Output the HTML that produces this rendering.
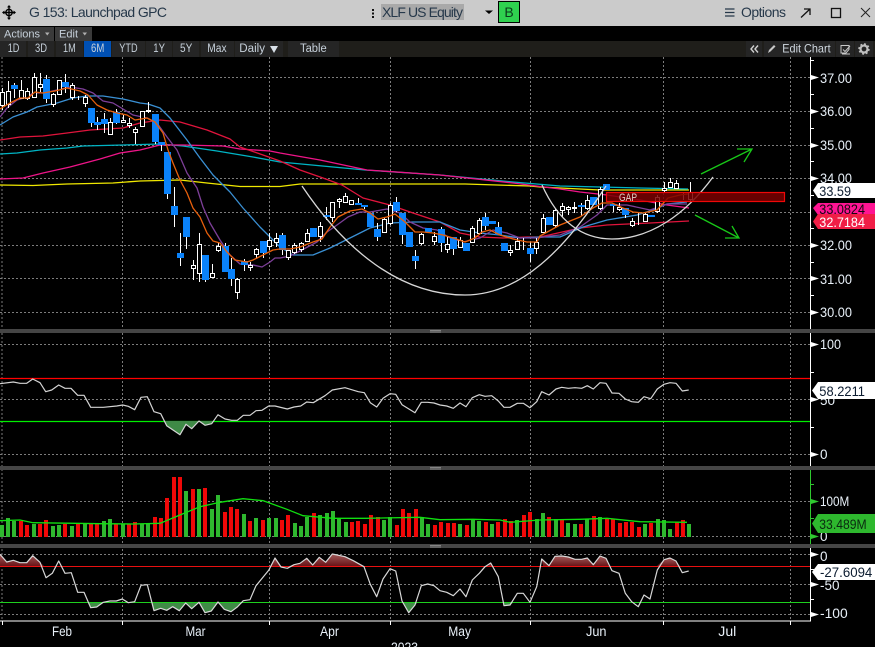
<!DOCTYPE html>
<html><head><meta charset="utf-8"><style>
html,body{margin:0;padding:0;background:#000;width:875px;height:647px;overflow:hidden}
svg{display:block;font-family:"Liberation Sans",sans-serif}
</style></head><body>
<svg width="875" height="647" viewBox="0 0 875 647" xmlns="http://www.w3.org/2000/svg">
<defs>
<linearGradient id="rd" x1="0" y1="0" x2="0" y2="1"><stop offset="0" stop-color="#a05a5a"/><stop offset="1" stop-color="#6a1418"/></linearGradient>
</defs>
<rect width="875" height="647" fill="#000"/>
<!-- header -->
<rect width="875" height="26" fill="#cbcbcb"/>
<g stroke="#000" stroke-width="1.4" fill="none"><circle cx="9" cy="12.5" r="3.2"/><path d="M9 6.5V18.5M3 12.5H15"/></g>
<path d="M9 5l-2 2.4h4zM9 20l-2-2.4h4zM2 12.5l2.4-2v4zM16 12.5l-2.4-2v4z" fill="#000"/>
<text x="29" y="17" font-size="14" fill="#26384a" textLength="138">G 153: Launchpad GPC</text>
<path d="M372 9h2v2h-2zM372 12.500h2v2h-2zM372 16h2v2h-2z" fill="#111"/>
<rect x="381" y="4" width="83" height="16" fill="#a9a9a9"/>
<text x="382" y="17" font-size="14" fill="#26384a" textLength="81">XLF US Equity</text>
<path d="M485 10.500h8l-4 3.500z" fill="#000"/>
<rect x="498.500" y="1.500" width="21" height="21" fill="#2fd14f" stroke="#000"/>
<text x="509" y="17" font-size="14" fill="#0b3a1c" text-anchor="middle">B</text>
<path d="M725 9h9.500M725 12.500h9.500M725 16h9.500" stroke="#26384a" stroke-width="1.200"/>
<text x="741" y="17" font-size="14" fill="#26384a" textLength="45">Options</text>
<path d="M801 17.500L810 9M804 9h6v6" stroke="#111" stroke-width="1.300" fill="none"/>
<rect x="831.500" y="8.500" width="9" height="9" fill="none" stroke="#111" stroke-width="1.300"/>
<path d="M861 8L870 17M870 8L861 17" stroke="#222" stroke-width="1"/>
<!-- actions row -->
<rect x="0" y="27" width="54" height="14" fill="#3a3a3a"/>
<rect x="55" y="27" width="37" height="14" fill="#3a3a3a"/>
<text x="4" y="37.500" font-size="11" fill="#c6d0da" textLength="36">Actions</text>
<path d="M45 32.500h4.500l-2.250 3z" fill="#b0b0b0"/>
<text x="59" y="37.500" font-size="11" fill="#c6d0da" textLength="19">Edit</text>
<path d="M82.500 32.500h4.500l-2.250 3z" fill="#b0b0b0"/>
<!-- range row -->
<rect x="0" y="41" width="875" height="16" fill="#1f1e1a"/>
<g fill="#252525"><rect x="0" y="41" width="26" height="16"/><rect x="28" y="41" width="26" height="16"/><rect x="56" y="41" width="27" height="16"/><rect x="112" y="41" width="33" height="16"/><rect x="146" y="41" width="26" height="16"/><rect x="173" y="41" width="26" height="16"/><rect x="201" y="41" width="33" height="16"/><rect x="235" y="41" width="48" height="16"/><rect x="288" y="41" width="51" height="16"/><rect x="746" y="41" width="16" height="16"/><rect x="764" y="41" width="71" height="16"/><rect x="836" y="41" width="18" height="16"/><rect x="855" y="41" width="18" height="16"/></g>
<rect x="84" y="41" width="27" height="16" fill="#0050b4"/>
<g font-size="11.500" fill="#c6d0da" lengthAdjust="spacingAndGlyphs">
<text x="7.700" y="52" textLength="11.700" lengthAdjust="spacingAndGlyphs">1D</text><text x="35" y="52" textLength="12" lengthAdjust="spacingAndGlyphs">3D</text><text x="63" y="52" textLength="12.700" lengthAdjust="spacingAndGlyphs">1M</text><text x="91" y="52" textLength="13.300" lengthAdjust="spacingAndGlyphs">6M</text><text x="119.300" y="52" textLength="18.300" lengthAdjust="spacingAndGlyphs">YTD</text><text x="153.300" y="52" textLength="11.700" lengthAdjust="spacingAndGlyphs">1Y</text><text x="180" y="52" textLength="12.300" lengthAdjust="spacingAndGlyphs">5Y</text><text x="207.300" y="52" textLength="19.300" lengthAdjust="spacingAndGlyphs">Max</text><text x="239.300" y="52" textLength="25.700" lengthAdjust="spacingAndGlyphs">Daily</text><text x="300" y="52" textLength="26.700" lengthAdjust="spacingAndGlyphs">Table</text>
</g>
<path d="M270 46h8l-4 7z" fill="#d8e0e8"/>
<path d="M754 45.500l-3 3.500 3 3.500M758 45.500l-3 3.500 3 3.500" stroke="#d0d0d0" stroke-width="1.400" fill="none"/>
<path d="M768 53l1-3 5-5 1.500 1.500-5 5z" fill="#c8c8c8"/>
<text x="782.300" y="52.500" font-size="12" fill="#d0d8e0" textLength="48.300" lengthAdjust="spacingAndGlyphs">Edit Chart</text>
<path d="M841 45.500h8v4l-3 3.500h-5zM843 49.500l2 2 5-5.500M842 54h8" stroke="#c8c8c8" fill="none"/>
<circle cx="864" cy="49" r="3.500" fill="none" stroke="#c0c0c0" stroke-width="2.200"/><circle cx="864" cy="49" r="5" fill="none" stroke="#c0c0c0" stroke-width="1.400" stroke-dasharray="2 1.900"/>
<!-- grid -->
<g stroke="#7c7c7c" stroke-width="1" stroke-dasharray="2 2" fill="none" shape-rendering="crispEdges">
<path d="M2 57V621M122.500 57V621M269.500 57V621M390.500 57V621M530.500 57V621M663.500 57V621M790.500 57V621"/>
<path d="M0 77.500H810M0 111.500H810M0 145.500H810M0 178.500H810M0 212.500H810M0 245.500H810M0 278.500H810M0 312.500H810M0 344.500H810M0 399.500H810M0 454.500H810M0 501.500H810M0 536.500H810M0 554.500H810M0 584.500H810M0 614.500H810"/>
</g>
<!-- moving averages -->
<g fill="none" stroke-width="1.300" stroke-linejoin="round">
<polyline stroke="#f0e800" points="0,185 33,185.500 67,184 113,183 140,181 180,180 207,183 240,186.500 280,186.500 300,184 385,184 465,184 530,186 540,187 600,190 689,190"/>
<polyline stroke="#00b4c4" points="0,154 17,153 40,150 67,148 83,146 123,145 160,144 183,146 217,151 253,157 280,162 365,170 440,175 513,182 560,186 600,187 640,188 688,189"/>
<polyline stroke="#ee1488" points="0,179 23,178 43,173 70,167 100,159 120,153 140,150 160,145 183,145 223,146 240,149 270,151 280,153 320,160 367,170 440,175 513,183 560,189 580,192 607,195 640,200 667,205 689,208"/>
<polyline stroke="#e0143c" points="0,140 20,137 43,136 67,133 90,130 123,128 140,123 160,120 180,122 207,130 230,139 240,147 263,155 280,161 300,170 323,178 342,185 363,198 390,205 413,213 440,222 460,233 480,237 503,238 527,237 540,237 580,228 607,225 650,223 689,221"/>
<polyline stroke="#3a90d4" points="0,125 13,117 27,112 37,107 57,103 73,98 87,96 103,96 123,99 140,103 148,104 160,108 170,118 187,140 200,158 213,175 230,192 243,208 260,227 273,240 280,247 293,255 313,255 330,248 350,238 370,228 390,223 413,222 440,222 460,230 480,233 500,235 520,238 540,237 560,237 583,227 607,220 637,215 653,210 667,204 687,202"/>
<polyline stroke="#7d3f98" points="0,117 7,108 17,100 27,97 33,93 43,93 57,90 70,87 83,89 93,93 103,101 113,103 123,109 133,115 147,118 157,123 167,137 177,150 187,173 197,188 203,207 210,223 220,240 230,255 240,264 253,265 262,267 270,262 275,258 280,258 290,256 300,251 317,242 327,232 337,225 348,217 360,212 370,212 387,209 400,213 410,222 423,228 437,230 450,238 463,242 480,238 493,230 507,233 520,238 537,238 550,236 560,235 580,227 597,215 607,205 627,205 650,210 667,204 687,204"/>
</g>
<!-- candles wicks -->
<path shape-rendering="crispEdges" stroke="#fff" stroke-width="1" fill="none" d="M2.500 88V110M8.500 81V108M14.500 83V98M21.500 80V98M27.500 88V100M34.500 73V98M40.500 73V92M46.500 75V103M53.500 93V107M59.500 80V94M65.500 74V93M72.500 83V100M78.500 96V100M85.500 95V107M91.500 108V127M97.500 117V130M104.500 113V133M110.500 118V135M116.500 109V124M123.500 115V123M129.500 118V128M135.500 127V144M142.500 111V127M148.500 102V113M155.500 114V144M161.500 142V151M167.500 152V199M174.500 187V227M180.500 233V266M186.500 217V249M193.500 260V280M199.500 233V282M205.500 255V282M212.500 264V277M218.500 243V252M225.500 243V272M231.500 258V286M237.500 278V299M244.500 259V271M250.500 262V271M256.500 248V258M263.500 241V258M269.500 233V250M276.500 233V247M282.500 233V255M288.500 250V260M294.500 243V254M301.500 242V252M307.500 229V242M313.500 228V237M320.500 222V242M326.500 207V220M332.500 202V222M339.500 198V208M345.500 193V203M351.500 200V204M358.500 198V205M364.500 205V209M370.500 213V227M377.500 223V241M384.500 217V232M390.500 203V225M396.500 197V212M402.500 213V244M409.500 232V247M415.500 250V269M421.500 233V245M428.500 228V232M434.500 232V245M441.500 227V252M447.500 237V253M453.500 237V255M460.500 237V248M466.500 243V251M472.500 226V243M479.500 218V235M485.500 213V230M492.500 221V224M498.500 222V235M504.500 243V251M510.500 245V256M517.500 238V250M523.500 238V250M530.500 242V262M536.500 238V254M543.500 214V233M549.500 217V225M555.500 208V227M562.500 203V217M568.500 206V215M574.500 202V213M581.500 203V216M587.500 195V210M593.500 197V205M600.500 187V210M606.500 184V190M613.500 204V212M619.500 203V211M625.500 208V218M632.500 218V227M638.500 213V225M645.500 212V221M651.500 215V217M657.500 195V213M664.500 182V192M670.500 178V188M676.500 180V188M683.500 192V200M690.500 182V202"/>
<!-- hollow bodies -->
<path shape-rendering="crispEdges" stroke="#fff" stroke-width="1" fill="#000" d="M.5 92.500h4v13h-4zM6.500 91.500h4v13h-4zM19.500 90.500h4v8h-4zM25.500 91.500h4v7h-4zM32.500 77.500h4v20h-4zM38.500 84.500h4v3h-4zM51.500 94.500h4v10h-4zM57.500 80.500h4v14h-4zM70.500 85.500h4v12h-4zM83.500 97.500h4v6h-4zM108.500 122.500h4v12h-4zM121.500 120.500h4v2h-4zM127.500 123.500h4v2h-4zM133.500 129.500h4v3h-4zM140.500 111.500h4v15h-4zM146.500 110.500h4v1h-4zM191.500 265.500h4v3h-4zM197.500 244.500h4v29h-4zM210.500 273.500h4v4h-4zM216.500 246.500h4v4h-4zM235.500 279.500h4v13h-4zM248.500 265.500h4v2h-4zM254.500 249.500h4v5h-4zM267.500 240.500h4v6h-4zM274.500 238.500h4v4h-4zM286.500 250.500h4v7h-4zM292.500 245.500h4v7h-4zM299.500 243.500h4v6h-4zM305.500 233.500h4v8h-4zM318.500 226.500h4v10h-4zM330.500 202.500h4v15h-4zM337.500 199.500h4v2h-4zM343.500 196.500h4v6h-4zM349.500 200.500h4v4h-4zM382.500 219.500h4v13h-4zM388.500 205.500h4v18h-4zM419.500 234.500h4v9h-4zM432.500 236.500h4v5h-4zM445.500 244.500h4v5h-4zM458.500 240.500h4v7h-4zM470.500 228.500h4v14h-4zM477.500 220.500h4v13h-4zM508.500 250.500h4v2h-4zM515.500 241.500h4v8h-4zM534.500 242.500h4v6h-4zM541.500 218.500h4v14h-4zM553.500 210.500h4v15h-4zM560.500 206.500h4v4h-4zM566.500 207.500h4v2h-4zM572.500 207.500h4v1h-4zM585.500 200.500h4v8h-4zM598.500 189.500h4v19h-4zM617.500 207.500h4v2h-4zM630.500 221.500h4v4h-4zM643.500 214.500h4v7h-4zM655.500 197.500h4v14h-4zM662.500 188.500h4v2h-4zM668.500 182.500h4v5h-4zM674.500 183.500h4v5h-4zM688.500 192.500h4v7h-4z"/>
<!-- blue bodies -->
<path shape-rendering="crispEdges" fill="#0a82fa" d="M11 85h7v4h-7zM43 79h7v20h-7zM62 82h7v5h-7zM88 108h7v15h-7zM94 122h7v3h-7zM101 119h7v5h-7zM113 112h7v11h-7zM152 114h7v28h-7zM158 142h7v3h-7zM164 152h7v42h-7zM171 206h7v9h-7zM177 253h7v5h-7zM183 217h7v20h-7zM202 255h7v25h-7zM222 246h7v26h-7zM228 269h7v10h-7zM241 261h7v4h-7zM260 241h7v12h-7zM279 235h7v15h-7zM310 228h7v9h-7zM323 215h7v2h-7zM355 203h7v2h-7zM361 205h7v2h-7zM367 213h7v14h-7zM374 229h7v8h-7zM393 202h7v9h-7zM399 213h7v22h-7zM406 232h7v15h-7zM412 256h7v5h-7zM425 228h7v4h-7zM438 229h7v14h-7zM450 237h7v12h-7zM463 243h7v8h-7zM482 217h7v9h-7zM489 221h7v3h-7zM495 227h7v8h-7zM501 243h7v8h-7zM527 248h7v6h-7zM546 217h7v8h-7zM578 205h7v2h-7zM590 197h7v8h-7zM603 184h7v6h-7zM610 204h7v2h-7zM622 208h7v7h-7zM648 215h7v2h-7z"/>
<!-- orange -->
<polyline fill="none" stroke="#e8600c" stroke-width="1.300" stroke-linejoin="round" points="0,109 10,103 20,98 28,98 35,92 43,93 55,91 67,88 80,91 88,95 97,105 107,110 117,113 127,115 135,120 147,118 155,122 163,133 168,150 173,163 180,180 187,193 193,208 200,217 207,233 213,241 220,243 227,252 235,260 247,262 253,260 263,255 273,250 280,249 290,249 300,247 313,242 322,239 330,227 338,217 350,211 362,209 370,213 378,219 387,217 395,214 405,222 415,232 423,232 433,233 443,235 453,238 465,242 475,238 482,232 490,230 500,235 513,239 527,242 537,242 540,236 560,225 580,217 593,208 602,203 612,203 623,208 633,212 643,213 657,210 668,198 680,195 688,194"/>
<!-- cup curves -->
<g fill="none" stroke="#d8d8d8" stroke-width="1.300">
<path d="M302 186C345 250 400 295 465 295C520 295 565 250 606 186"/>
<path d="M542 185C560 225 585 239 612 239C650 239 685 215 713 177"/>
</g>
<!-- gap box -->
<rect x="606.500" y="192.500" width="178" height="9" fill="#7a0000" fill-opacity=".85" stroke="#f00808" stroke-width="1.200"/>
<text x="619" y="201" font-size="11" fill="#e0d0c8" textLength="18" lengthAdjust="spacingAndGlyphs">GAP</text>
<!-- arrows -->
<g fill="none" stroke="#18c818" stroke-width="1.300">
<path d="M701 174L752 149M737 149L752 149L744 162"/>
<path d="M695 215L739 238M732 226L739 238L725 238"/>
</g>
<!-- panel separators -->
<g fill="#454545"><rect x="0" y="329" width="875" height="4"/><rect x="0" y="466" width="875" height="4"/><rect x="0" y="544" width="875" height="4"/></g>
<path d="M430 330.500h11M430 332h11M430 467.500h11M430 469h11M430 545.500h11M430 547h11" stroke="#999" stroke-width=".8"/>
<!-- RSI -->
<path d="M0 378.500H810" stroke="#f00" stroke-width="1.200"/>
<path d="M0 421.500H810" stroke="#0e0" stroke-width="1.200"/>
<polygon fill="#3f8a46" points="165,421 166.700,425.700 180,434.700 186,424.300 191.700,428.700 199,421 205,425.300 211.700,423.700 214,421"/>
<polyline fill="none" stroke="#d4d4d4" stroke-width="1.200" stroke-linejoin="round" points="0,383.700 13.300,382 20,383.300 26.700,383.300 32.700,379 40,382.700 45.700,391.700 51.700,390 58.700,385 65,388.300 71,388.300 77.700,395.300 84,395.300 90.700,407.300 103.300,407.300 116.700,406 122.700,405 128.300,406.300 134.700,409.700 141,397.300 147.300,396.700 154,411.700 160.700,413.700 166.700,425.700 180,434.700 186,424.300 191.700,428.700 199,421 205,425.300 211.700,423.700 218,414.700 225,419 231.700,420.300 237.300,420.300 243.300,415.300 250,415.300 256,410.700 262,410.300 268.700,406 275,406 287.300,409 294,407 300.700,406 306.700,402 313.300,402.700 325,395.700 332.300,390 345,387.700 358.300,391.700 364.300,392.700 370.300,402.700 376.700,407 383,398.300 390,393.700 395.700,394.300 402,404.700 415,412.700 421.300,402.300 427.700,402.300 434,403 440,405 446.700,406 453.300,408.300 460,403 466,406.700 472.300,397.700 479.300,394.700 485,396.300 491.700,395.700 498.300,401 504,407.300 510,407.300 517.300,403.300 523.300,403.300 530,407.700 536.700,401.700 541.700,391.700 549,395 556,389 561.700,387.300 568.300,388.300 575,387.700 581.700,388.300 587.300,385.700 593.300,389 600,382.700 606,383.300 612,393 619,393.300 625.300,399 631.700,401.700 638.300,402.300 644,396.700 650.700,398.700 657.300,389 664,384.300 670,382.700 676,383.300 682.300,391 688.700,390"/>
<!-- volume -->
<path shape-rendering="crispEdges" fill="none" stroke="#2fb82f" stroke-width="4" d="M2 525V537M8 518V537M14 521V537M34 524V537M53 526V537M59 525V537M72 526V537M85 524V537M104 521V537M110 519V537M123 524V537M142 524V537M148 524V537M186 491V537M199 489V537M212 509V537M218 495V537M244 514V537M256 518V537M269 518V537M276 518V537M295 523V537M301 526V537M307 517V537M320 515V537M327 513V537M333 511V537M339 518V537M346 522V537M384 520V537M390 517V537M422 517V537M428 524V537M460 524V537M473 519V537M479 521V537M492 524V537M517 520V537M537 519V537M543 513V537M556 519V537M568 523V537M575 524V537M587 519V537M600 517V537M645 524V537M658 519V537M664 520V537M670 529V537M689 524V537"/>
<path shape-rendering="crispEdges" fill="none" stroke="#f00808" stroke-width="4" d="M21 521V537M27 525V537M40 524V537M46 520V537M65 524V537M78 524V537M91 524V537M97 524V537M116 524V537M129 524V537M135 522V537M155 517V537M161 518V537M167 498V537M174 477V537M180 477V537M193 489V537M205 488V537M225 512V537M231 507V537M237 509V537M250 521V537M263 520V537M282 520V537M288 515V537M314 513V537M352 522V537M358 521V537M365 524V537M371 515V537M378 517V537M397 525V537M403 509V537M409 513V537M416 509V537M435 525V537M441 522V537M448 523V537M454 523V537M467 525V537M486 522V537M498 522V537M505 519V537M511 521V537M524 515V537M530 512V537M549 517V537M562 519V537M581 524V537M594 516V537M607 519V537M613 519V537M620 523V537M626 522V537M632 522V537M639 527V537M651 523V537M677 522V537M683 520V537"/>
<polyline fill="none" stroke="#10e010" stroke-width="1.300" points="0,520.700 20,520 33,522.700 100,523.700 133,524 160,523.300 180,515 200,506.700 220,502.300 243,498.700 263,500.700 287,509.300 303,515.700 333,518.300 367,518.300 420,517.300 440,519.700 473,519.300 500,520 510,522.300 540,520 580,519.300 607,518.300 640,521.700 687,522.300"/>
<!-- CCI -->
<polygon fill="url(#rd)" points="0,554.300 6.700,562 13.300,560.300 20,562.700 26.700,562.700 32.700,555.700 40,562.300 44,566 0,566"/>
<polygon fill="url(#rd)" points="271,566 275,558 281,566"/>
<polygon fill="url(#rd)" points="289,566 294,564.700 300,563.300 306.700,558.300 312.700,565 319.300,557.300 325.700,562.300 332.300,554 345,556.700 353.300,560.700 364,566"/>
<polygon fill="url(#rd)" points="488,566 490.700,563 493,566"/>
<polygon fill="url(#rd)" points="543,566 541.700,559 549,565.700 555,556.300 561.700,556 568.300,557 575,559.300 581.700,559.300 587.300,558 593.300,564.700 600,556 606,558.300 610,566"/>
<polygon fill="url(#rd)" points="657,566 664,559.700 670,558 676,561 680,566"/>
<g fill="#3f8a46">
<polygon points="88,602 90.700,607.700 96.700,607 103,602"/>
<polygon points="152,602 154,610.700 160.700,608.300 166.700,610.300 172.700,606.700 179.300,610.700 185.700,603 191.700,608.700 199,602.300 205,612.700 211.300,611 218,602 224.300,609.300 231,611.700 237.300,607 243,602"/>
<polygon points="402,602 408.700,612.700 415,605 418,602"/>
<polygon points="503,602 504,605.700 510,605 514,602"/>
</g>
<path d="M0 566.500H810" stroke="#e81010" stroke-width="1"/>
<path d="M0 602.500H810" stroke="#1ed01e" stroke-width="1"/>
<polyline fill="none" stroke="#d8d8d8" stroke-width="1.200" stroke-linejoin="round" points="0,554.300 6.700,562 13.300,560.300 20,562.700 26.700,562.700 32.700,555.700 40,562.300 46,577.700 52.300,573.300 58.700,561 65,573.300 71.300,572.700 77.700,592.300 84,592.300 90.700,607.700 96.700,607 103.300,602.300 110,601 116.300,601 122.300,599 128.300,602.700 134.700,601.700 141,585.300 147.300,584.700 154,610.700 160.700,608.300 166.700,610.300 172.700,606.700 179.300,610.700 185.700,603 191.700,608.700 199,602.300 205,612.700 211.300,611 218,602 224.300,609.300 231,611.700 237.300,607 243.300,600.700 250,599.700 256,585.700 268.700,570.300 275,558 281,567 287.300,568.300 294,564.700 300,563.300 306.700,558.300 312.700,565 319.300,557.300 325.700,562.300 332.300,554 345,556.700 353.300,560.700 364,566.700 370.300,584.300 376.700,596.700 383,579 390,568.700 395.700,571 402,601 408.700,612.700 415,605 421.300,585.700 427.700,584 434,585.700 440,590.700 446.700,592.300 453.300,595.700 460,589 466,596.700 472.300,580 479.300,573.300 485,566.700 490.700,563 498.300,576.700 504,605.700 510,605 517.300,593.300 523.300,593.300 530,602.300 536.700,586.700 541.700,559 549,565.700 555,556.300 561.700,556 568.300,557 575,559.300 581.700,559.300 587.300,558 593.300,564.700 600,556 606,558.300 612,570.700 619,573.300 625.300,593.300 631.700,601.700 638.300,606.700 644,595 650,599 657.300,570 664,559.700 670,558 676,561 682.300,572.700 688.700,571"/>
<!-- axes -->
<g shape-rendering="crispEdges">
<path d="M810.500 57V329M810.500 333V466M810.500 548V621.500M0 621H811" stroke="#fff" stroke-width="1.200"/>
<path d="M810.500 470V544" stroke="#2fc82f" stroke-width="1.200"/>
<path d="M2.500 621V625M122.500 621V625M269.500 621V625M390.500 621V625M530.500 621V625M663.500 621V625M790.500 621V625" stroke="#fff"/>
<path d="M811 60.500h3M811 94.500h3M811 128.500h3M811 161.500h3M811 195.500h3M811 228.500h3M811 262.500h3M811 295.500h3M811 372.500h3M811 427.500h3M811 569.500h3M811 599.500h3" stroke="#fff"/>
<path d="M811 484.500h3M811 518.500h3" stroke="#2fc82f"/>
</g>
<path fill="#fff" d="M811 75l8 2.500-8 2.500zM811 109l8 2.500-8 2.500zM811 143l8 2.500-8 2.500zM811 176l8 2.500-8 2.500zM811 243l8 2.500-8 2.500zM811 276l8 2.500-8 2.500zM811 310l8 2.500-8 2.500zM811 342l8 2.500-8 2.500zM811 397l8 2.500-8 2.500zM811 452l8 2.500-8 2.500zM811 552l8 2.500-8 2.500zM811 582l8 2.500-8 2.500zM811 612l8 2.500-8 2.500z"/>
<path fill="#2fc82f" d="M811 499l8 2.500-8 2.500zM811 534l8 2.500-8 2.500z"/>
<g font-size="13.500" fill="#e8f0f8">
<text x="820" y="83" textLength="32" lengthAdjust="spacingAndGlyphs">37.00</text><text x="820" y="116" textLength="32" lengthAdjust="spacingAndGlyphs">36.00</text><text x="820" y="150" textLength="32" lengthAdjust="spacingAndGlyphs">35.00</text><text x="820" y="183" textLength="32" lengthAdjust="spacingAndGlyphs">34.00</text><text x="820" y="250" textLength="32" lengthAdjust="spacingAndGlyphs">32.00</text><text x="820" y="284" textLength="32" lengthAdjust="spacingAndGlyphs">31.00</text><text x="820" y="317" textLength="32" lengthAdjust="spacingAndGlyphs">30.00</text>
<text x="820" y="349" textLength="21" lengthAdjust="spacingAndGlyphs">100</text><text x="820" y="405">50</text><text x="820" y="459">0</text>
<text x="820" y="506" textLength="29.300" lengthAdjust="spacingAndGlyphs">100M</text><text x="820" y="541">0</text>
<text x="820" y="561">0</text><text x="820" y="590">-50</text><text x="820" y="618" textLength="27.700" lengthAdjust="spacingAndGlyphs">-100</text>
</g>
<!-- value labels -->
<path d="M813 190.500l5-7.500h57v15h-57z" fill="#fff"/>
<text x="819.300" y="196" font-size="14" fill="#0c1c30" textLength="31.700" lengthAdjust="spacingAndGlyphs">33.59</text>
<path d="M813 208l5-5h57v12h-57z" fill="#ff1493"/>
<text x="819.300" y="214" font-size="14" fill="#14060e" textLength="45.700" lengthAdjust="spacingAndGlyphs">33.0824</text>
<path d="M813 221.500l5-7.500h57v15h-57z" fill="#f01e46"/>
<text x="819.300" y="227" font-size="14" fill="#fff" textLength="45.700" lengthAdjust="spacingAndGlyphs">32.7184</text>
<path d="M812 390.500l6-8.500h57v17h-57z" fill="#fff"/>
<text x="819.300" y="396" font-size="13.500" fill="#0c1c30" textLength="45.700" lengthAdjust="spacingAndGlyphs">58.2211</text>
<path d="M812 523.500l6-9.500h57v19h-57z" fill="#2eb82e"/>
<text x="819.300" y="529" font-size="13.500" fill="#0a2a10" textLength="47.300" lengthAdjust="spacingAndGlyphs">33.489M</text>
<path d="M812 572l6-8h57v16h-57z" fill="#fff"/>
<text x="820" y="577" font-size="13.500" fill="#0c1c30" textLength="52.300" lengthAdjust="spacingAndGlyphs">-27.6094</text>
<!-- months -->
<g font-size="13.500" fill="#e8f0f8">
<text x="52" y="636" textLength="20" lengthAdjust="spacingAndGlyphs">Feb</text><text x="185.500" y="636" textLength="20" lengthAdjust="spacingAndGlyphs">Mar</text><text x="320" y="636" textLength="19" lengthAdjust="spacingAndGlyphs">Apr</text><text x="448.300" y="636" textLength="22.700" lengthAdjust="spacingAndGlyphs">May</text><text x="586" y="636" textLength="20.500" lengthAdjust="spacingAndGlyphs">Jun</text><text x="718.300" y="636" textLength="18" lengthAdjust="spacingAndGlyphs">Jul</text><text x="391" y="652" textLength="27" lengthAdjust="spacingAndGlyphs">2023</text>
</g>
</svg>
</body></html>
